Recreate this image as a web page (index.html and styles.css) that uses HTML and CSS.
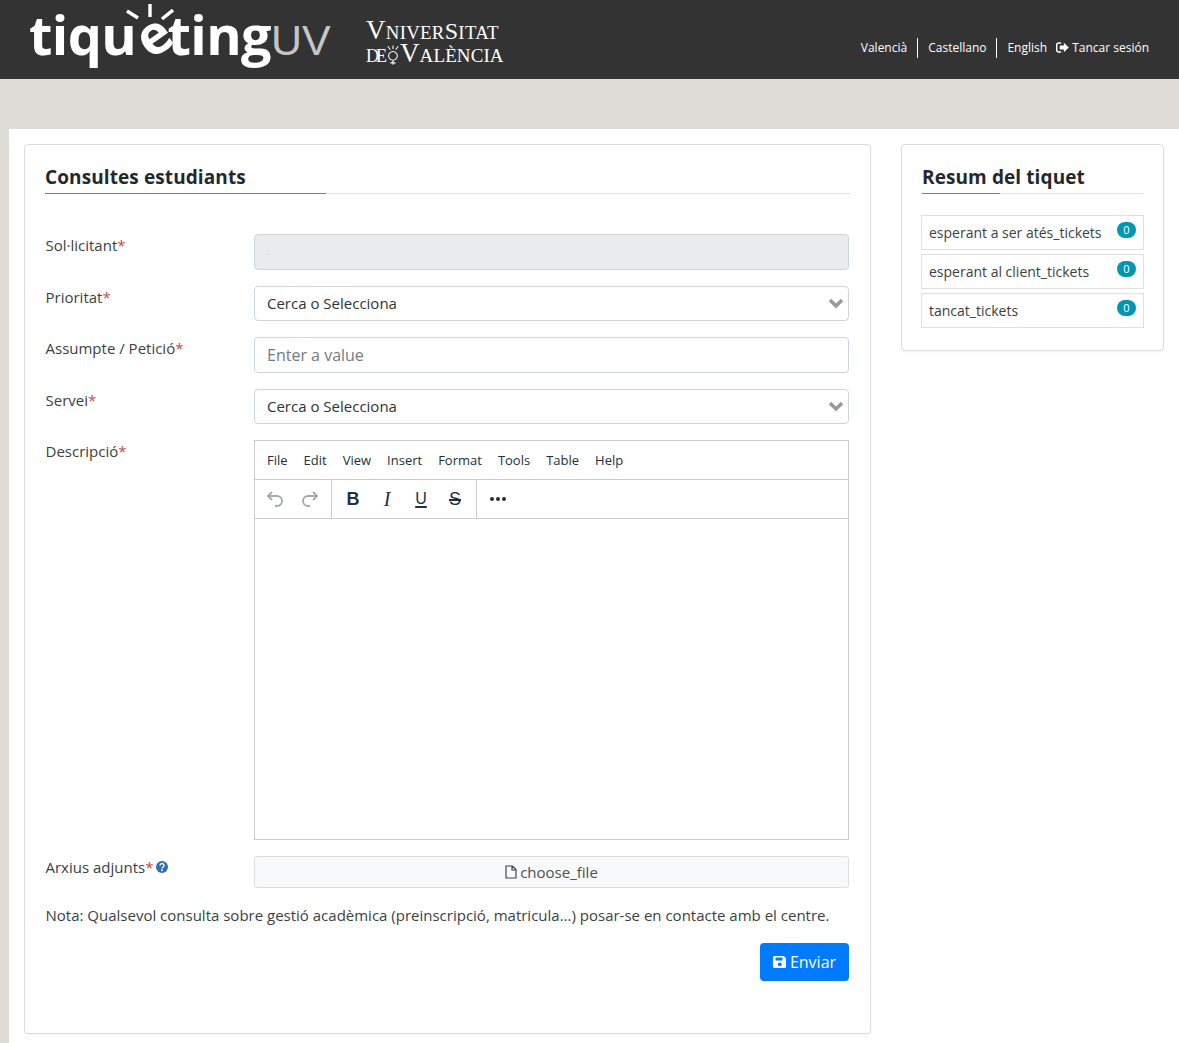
FILE: index.html
```html
<!DOCTYPE html>
<html>
<head>
<meta charset="utf-8">
<title>tiquetingUV</title>
<link rel="stylesheet" href="styles.css">
</head>
<body>
<header class="topbar">
  <div class="brand">
    <div class="logo">
      <svg class="rays" viewBox="0 0 48 18" width="48" height="18"><path d="M1 8l11 7M24 1v13M47 7l-11 9" stroke="#fff" stroke-width="3.4" fill="none"/></svg>
      <span>tiqu</span><span class="logo-e">e</span><span>ting</span><span class="logo-uv">UV</span>
    </div>
    <div class="uni">
      <div class="uni-top"><span class="big">V</span>NIVER<span class="mid">S</span>ITAT</div>
      <div class="uni-bottom"><span class="de">DE</span><svg class="crest" viewBox="0 0 16 22" width="14" height="20"><path d="M8 7a5 5 0 1 1-.1 0zM8 17v5M5 20h6M2 1l3 4M8 0v4M14 1l-3 4" fill="none" stroke="#fff" stroke-width="1.2"/></svg><span class="big">V</span>ALÈNCIA</div>
    </div>
  </div>
  <nav class="topnav">
    <a class="lang">Valencià</a>
    <a class="lang sep">Castellano</a>
    <a class="lang sep last">English</a>
    <a class="logout"><svg viewBox="0 0 14 12" width="13" height="11"><path d="M5.5 1H3a2.4 2.4 0 0 0-2.400 2.400v5.200A2.400 2.400 0 0 0 3 11h2.500" fill="none" stroke="#fff" stroke-width="1.700"/><path d="M4 3.800h4.500V.8L13.800 6l-5.300 5.200V8.200H4z" fill="#fff"/></svg>Tancar sesión</a>
  </nav>
</header>
<div class="band"></div>
<main class="main">
  <section class="card form-card">
    <h2 class="title title-long">Consultes estudiants</h2>
    <form class="form">
      <div class="row">
        <label class="lbl">Sol·licitant<i>*</i></label>
        <div class="field disabled">.</div>
      </div>
      <div class="row">
        <label class="lbl">Prioritat<i>*</i></label>
        <div class="field select">Cerca o Selecciona<svg class="chev" viewBox="0 0 16 11" width="16" height="11"><path d="M2 2l6 6 6-6" fill="none" stroke="#999" stroke-width="3.400"/></svg></div>
      </div>
      <div class="row">
        <label class="lbl">Assumpte / Petició<i>*</i></label>
        <div class="field input">Enter a value</div>
      </div>
      <div class="row">
        <label class="lbl">Servei<i>*</i></label>
        <div class="field select">Cerca o Selecciona<svg class="chev" viewBox="0 0 16 11" width="16" height="11"><path d="M2 2l6 6 6-6" fill="none" stroke="#999" stroke-width="3.400"/></svg></div>
      </div>
      <div class="row">
        <label class="lbl">Descripció<i>*</i></label>
        <div class="editor">
          <div class="menubar"><span>File</span><span>Edit</span><span>View</span><span>Insert</span><span>Format</span><span>Tools</span><span>Table</span><span>Help</span></div>
          <div class="toolbar">
            <div class="group g1">
              <svg viewBox="0 0 20 20" width="20" height="20"><path d="M7 3L3 7l4 4M3.500 7H12a5 5 0 0 1 0 10h-2" fill="none" stroke="#a3a9af" stroke-width="1.800"/></svg>
              <svg viewBox="0 0 20 20" width="20" height="20"><path d="M13 3l4 4-4 4M16.500 7H8a5 5 0 0 0 0 10h2" fill="none" stroke="#a3a9af" stroke-width="1.800"/></svg>
            </div>
            <div class="group g2">
              <b class="t-b">B</b><em class="t-i">I</em><span class="t-u">U</span><span class="t-s">S</span>
            </div>
            <div class="group g3"><svg viewBox="0 0 18 6" width="18" height="6"><circle cx="3" cy="3" r="2" fill="#222f3e"/><circle cx="9" cy="3" r="2" fill="#222f3e"/><circle cx="15" cy="3" r="2" fill="#222f3e"/></svg></div>
          </div>
          <div class="edit-area"></div>
        </div>
      </div>
      <div class="row">
        <label class="lbl">Arxius adjunts<i>*</i><svg class="help" viewBox="0 0 12 12" width="12" height="12"><circle cx="6" cy="6" r="6" fill="#2f6fb0"/><path d="M4 4.500a2 1.900 0 1 1 3 1.600c-.7.4-1 .7-1 1.400" fill="none" stroke="#fff" stroke-width="1.400"/><rect x="5.200" y="8.500" width="1.600" height="1.600" fill="#fff"/></svg></label>
        <div class="file"><svg viewBox="0 0 12 14" width="12" height="14"><path d="M1 1h6.500L11 4.500V13H1zM7 1v4h4" fill="none" stroke="#444" stroke-width="1.200"/></svg>choose_file</div>
      </div>
      <p class="note">Nota: Qualsevol consulta sobre gestió acadèmica (preinscripció, matricula...) posar-se en contacte amb el centre.</p>
      <div class="actions">
        <button class="btn" type="button"><svg viewBox="0 0 14 14" width="14" height="14"><path d="M1.500 1h9.300L13 3.200v8.300A1.500 1.500 0 0 1 11.500 13h-10A1.500 1.500 0 0 1 0 11.500v-9A1.500 1.500 0 0 1 1.500 1z" fill="#fff"/><rect x="2.500" y="2.500" width="7" height="3" rx=".5" fill="#007bff"/><circle cx="6.800" cy="9.300" r="1.900" fill="#007bff"/></svg>Enviar</button>
      </div>
    </form>
  </section>
  <aside class="card side-card">
    <h2 class="title title-short">Resum del tiquet</h2>
    <ul class="list">
      <li>esperant a ser atés_tickets<span class="badge">0</span></li>
      <li>esperant al client_tickets<span class="badge">0</span></li>
      <li>tancat_tickets<span class="badge">0</span></li>
    </ul>
  </aside>
</main>
</body>
</html>
```
FILE: styles.css
```css
* { box-sizing: border-box; }
html, body { margin: 0; padding: 0; height: 1043px; overflow: hidden; }
body { background: #dedcd6; font-family: "Open Sans", sans-serif; font-size: 15px; color: #3a3f44; }

.topbar { height: 79px; background: #333333; display: flex; justify-content: space-between; color: #fff; }
.brand { display: flex; padding-left: 29px; }
.logo { position: relative; font-family: "Open Sans", sans-serif; font-weight: 700; font-size: 54px; letter-spacing: -0.6px; line-height: 68px; height: 79px; white-space: nowrap; color: #fff; width: 337px; }
.rays { position: absolute; left: 97px; top: 3px; }
.logo-e { display: inline-block; transform: rotate(-35deg); }
.logo-uv { font-family: "Liberation Sans", sans-serif; font-weight: 400; font-size: 43px; color: #c3c5c6; letter-spacing: 0; }
.uni { font-family: "Liberation Serif", serif; font-size: 18.800px; line-height: 21px; padding-top: 20px; letter-spacing: .3px; white-space: nowrap; }
.uni .big { font-size: 27px; }
.uni .mid { font-size: 24px; }
.uni-bottom { display: flex; align-items: baseline; font-size: 19px; letter-spacing: .1px; }
.de { font-size: 18px; letter-spacing: -3px; margin-right: 2px; }
.crest { align-self: center; }

.topnav { display: flex; align-items: center; padding: 16px 30px 0 0; font-size: 12px; }
.lang { padding: 0 10px; line-height: 20px; }
.lang.sep { border-left: 1px solid #fff; }
.lang.last { padding-right: 9px; }
.logout { display: flex; align-items: center; gap: 3px; }

.band { height: 50px; }
.main { margin-left: 9px; height: 914px; background: #fff; display: flex; align-items: flex-start; gap: 30px; padding: 15px 15px 0; }
.card { background: #fff; border: 1px solid #dcdcdc; border-radius: 4px; box-shadow: 0 1px 2px rgba(0,0,0,.05); }
.form-card { width: 847px; height: 890px; padding: 20px 20px 0; }
.side-card { width: 263px; height: 207px; padding: 20px 20px 0; }
.title { margin: 0; font-size: 19px; font-weight: 700; color: #23282e; line-height: 25px; height: 29px; letter-spacing: .1px; background-repeat: no-repeat; background-position: 0 100%; }
.title-long { background-image: linear-gradient(#17a2b8, #17a2b8), linear-gradient(#dee2e6, #dee2e6); background-size: 281px 1px, 100% 1px; }
.title-short { background-image: linear-gradient(#17a2b8, #17a2b8), linear-gradient(#dee2e6, #dee2e6); background-size: 78px 1px, 100% 1px; }

.form { padding: 40px 0 0; display: flex; flex-direction: column; gap: 16px; }
.row { display: grid; grid-template-columns: 209px 595px; align-items: start; }
.lbl { line-height: 22px; white-space: nowrap; display: flex; align-items: center; padding-left: .5px; }
.lbl i { color: #c9484a; font-style: normal; }
.help { margin-left: 3px; }
.field { border: 1px solid #ced4da; border-radius: 4px; height: 36px; padding: 0 12px; line-height: 34px; font-size: 16px; position: relative; color: #495057; }
.disabled { background: #e9ecef; color: #c8ccd0; font-size: 9px; }
.select { height: 35px; color: #2f3337; font-size: 15px; line-height: 33px; }
.input { color: #757b82; }
.chev { position: absolute; right: 4px; top: 11px; }

.editor { height: 400px; border: 1px solid #ccc; display: flex; flex-direction: column; }
.menubar { height: 39px; border-bottom: 1px solid #ccc; display: flex; align-items: center; gap: 16px; padding: 0 12px; font-size: 13px; color: #222f3e; }
.toolbar { height: 39px; border-bottom: 1px solid #ccc; display: flex; }
.group { display: flex; align-items: center; border-right: 1px solid #ccc; height: 100%; }
.g1 { width: 77px; gap: 15px; padding-left: 10px; }
.g2 { width: 145px; padding-left: 4px; font-size: 18px; color: #222f3e; }
.g2 > * { width: 34px; text-align: center; font-family: "Liberation Sans", sans-serif; line-height: 20px; }
.t-b { font-weight: 700; }
.t-i { font-family: "Liberation Serif", serif !important; font-size: 20px; }
.t-u { text-decoration: underline; text-decoration-thickness: 2px; text-underline-offset: 2px; font-size: 16px; }
.t-s { text-decoration: line-through; text-decoration-thickness: 1.500px; font-size: 18px; }
.g3 { border: 0; padding-left: 12px; }
.edit-area { flex: 1; }

.file { height: 32px; background: #f8f9fa; border: 1px solid #dcdfe2; border-radius: 3px; display: flex; align-items: center; justify-content: center; gap: 3px; font-size: 15px; color: #495057; }
.note { margin: 0; padding-left: .5px; line-height: 22px; white-space: nowrap; font-size: 15px; }
.actions { display: flex; justify-content: flex-end; width: 804px; margin-top: 1px; }
.btn { width: 89px; height: 38px; background: #007bff; border: 0; border-radius: 4px; color: #fff; font: 16px "Open Sans", sans-serif; display: flex; align-items: center; justify-content: center; gap: 3px; padding: 0; }

.list { list-style: none; margin: 21px 0 0 -1px; padding: 0; display: flex; flex-direction: column; gap: 4px; width: 223px; }
.list li { position: relative; border: 1px solid #dfdfdf; height: 35px; padding: 0 7px; line-height: 34px; font-size: 14px; white-space: nowrap; }
.badge { position: absolute; right: 7px; top: 6px; width: 19px; height: 16px; border-radius: 8px; background: #0097b2; color: #fff; font-size: 11px; line-height: 16px; text-align: center; }
```
